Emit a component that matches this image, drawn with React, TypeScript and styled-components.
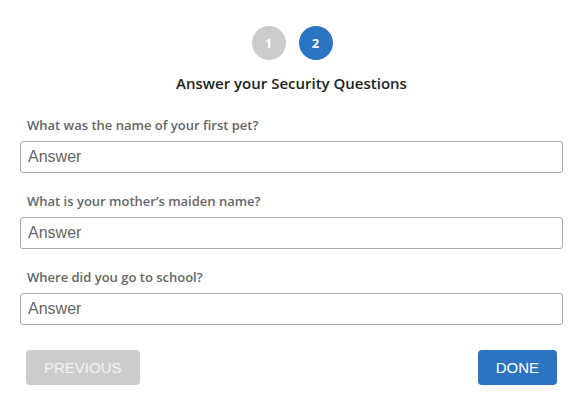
import styled, { createGlobalStyle } from "styled-components";

const GlobalStyle = createGlobalStyle`
  body {
    margin: 0;
    background: #ffffff;
    font-family: "Open Sans", "Noto Sans", sans-serif;
  }
`;

const questions = [
  "What was the name of your first pet?",
  "What is your mother\u2019s maiden name?",
  "Where did you go to school?",
];

function App() {
  return (
    <>
      <GlobalStyle />
      <Container>
        <Steps>
          <Step>1</Step>
          <Step $active>2</Step>
        </Steps>
        <Title>Answer your Security Questions</Title>
        <Form>
          {questions.map((q) => (
            <Field key={q}>
              <Label>{q}</Label>
              <Input placeholder="Answer" />
            </Field>
          ))}
        </Form>
        <Actions>
          <Button>PREVIOUS</Button>
          <Button $primary>DONE</Button>
        </Actions>
      </Container>
    </>
  );
}

export default App;

const Container = styled.div`
  padding: 26px 21px 0 20px;
`;

const Steps = styled.div`
  display: flex;
  justify-content: center;
  gap: 13px;
  padding-left: 1px;
`;

const Step = styled.div<{ $active?: boolean }>`
  width: 34px;
  height: 34px;
  border-radius: 50%;
  background: ${(p) => (p.$active ? "#2a74c2" : "#cccccc")};
  color: #ffffff;
  font-weight: 700;
  font-size: 13px;
  display: flex;
  align-items: center;
  justify-content: center;
`;

const Title = styled.h1`
  margin: 13px 0 0;
  text-align: center;
  font-size: 15px;
  font-weight: 600;
  color: #222222;
  line-height: 20px;
`;

const Form = styled.div`
  margin-top: 23px;
  display: flex;
  flex-direction: column;
  gap: 19px;
`;

const Field = styled.div`
  display: flex;
  flex-direction: column;
`;

const Label = styled.label`
  padding-left: 7px;
  font-size: 13px;
  font-weight: 600;
  color: #666666;
  line-height: 18px;
  margin-bottom: 7px;
`;

const Input = styled.input`
  box-sizing: border-box;
  width: 100%;
  height: 32px;
  border: 1px solid #aaaaaa;
  border-radius: 3px;
  padding: 0 7px;
  font-family: "Liberation Sans", Arial, sans-serif;
  font-size: 16px;
  color: #333333;
  outline: none;

  &::placeholder {
    color: #666666;
  }
`;

const Actions = styled.div`
  display: flex;
  justify-content: space-between;
  padding: 0 6px;
  margin-top: 25px;
`;

const Button = styled.button<{ $primary?: boolean }>`
  height: 35px;
  padding: 0 18px;
  border: none;
  border-radius: 4px;
  background: ${(p) => (p.$primary ? "#2a74c2" : "#cccccc")};
  color: ${(p) => (p.$primary ? "#ffffff" : "#f2f2f2")};
  font-family: "Liberation Sans", Arial, sans-serif;
  font-size: 15px;
  cursor: pointer;
`;
